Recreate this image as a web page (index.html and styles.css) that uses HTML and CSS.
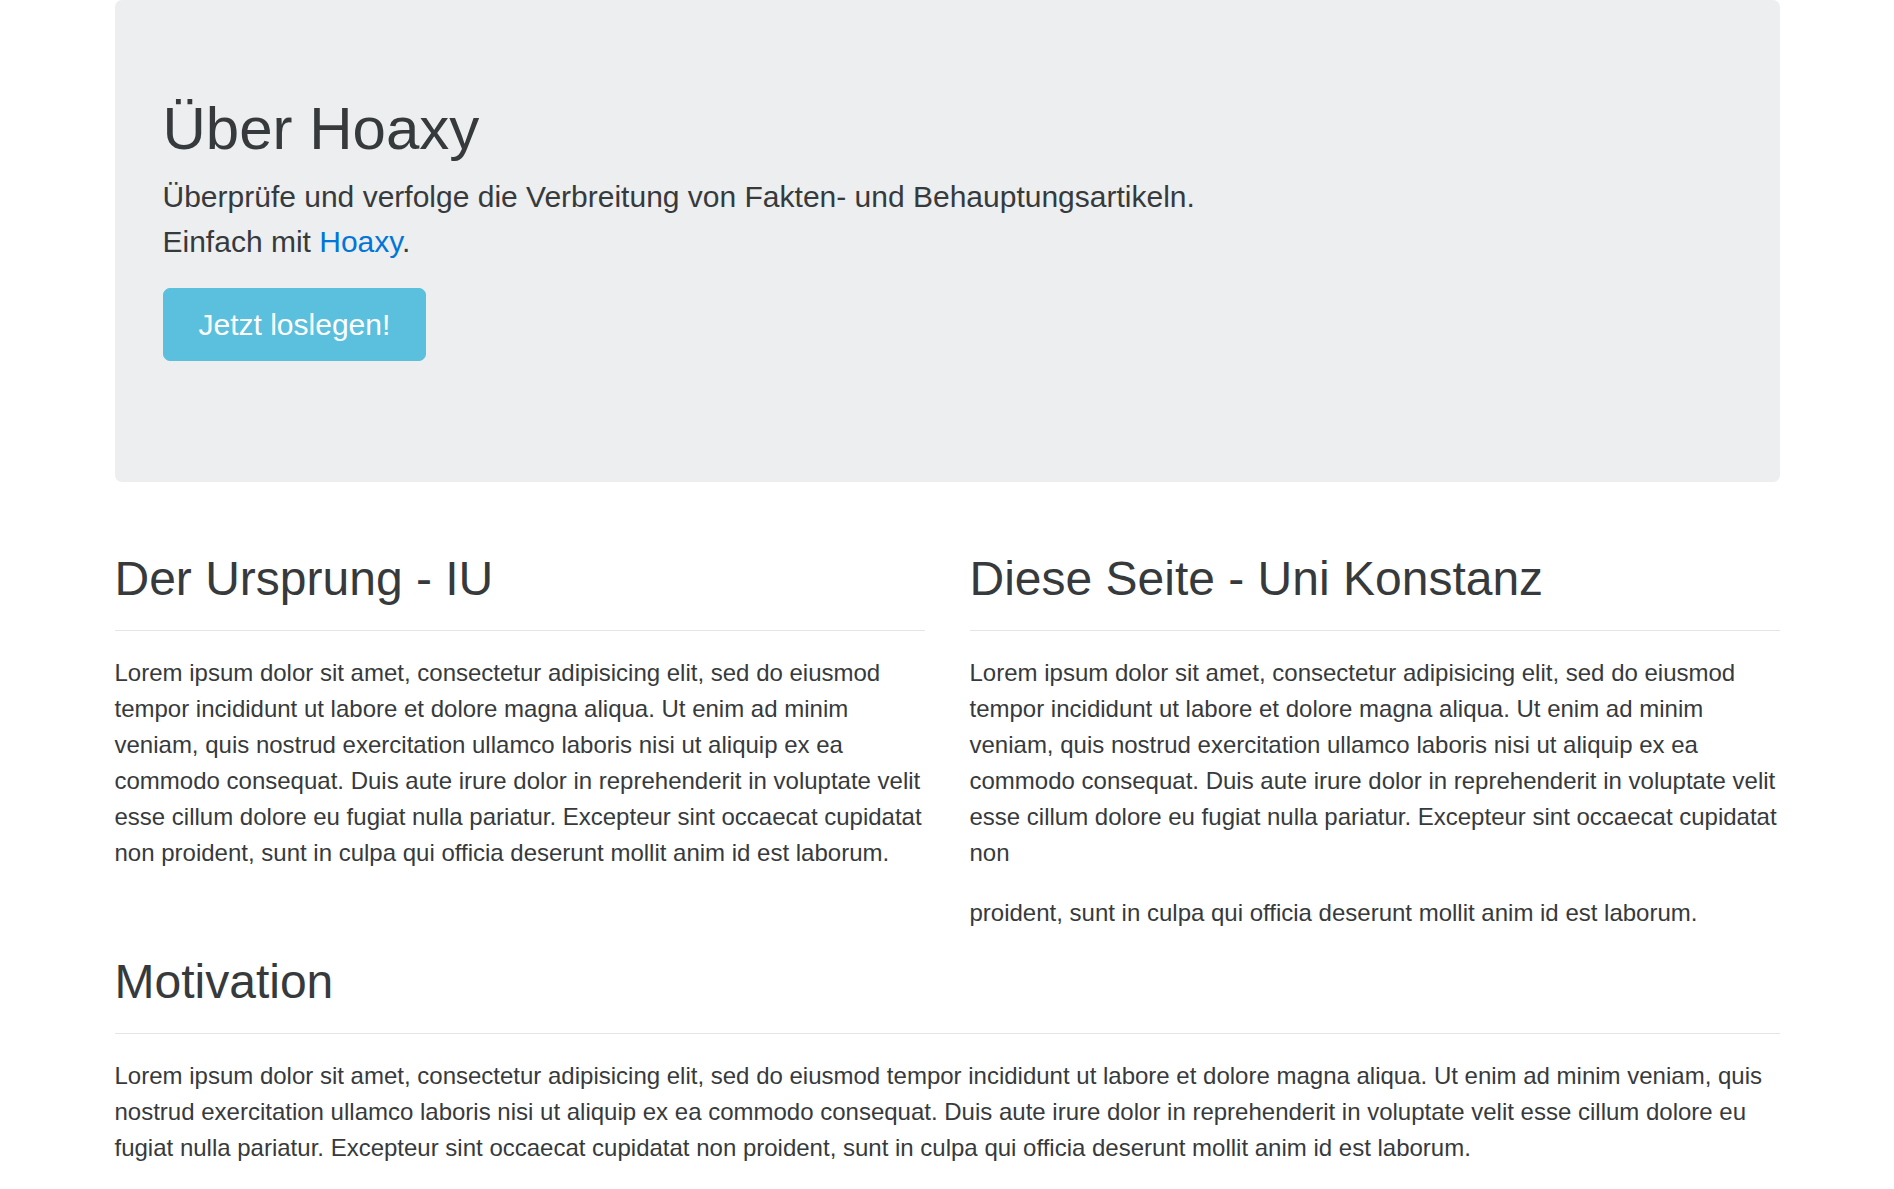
FILE: index.html
```html
<!DOCTYPE html>
<html lang="de">
<head>
<meta charset="utf-8">
<title>Über Hoaxy</title>
<link rel="stylesheet" href="styles.css">
</head>
<body>
<div class="container">
  <div class="jumbotron">
    <h1 class="display">Über Hoaxy</h1>
    <p class="lead">Überprüfe und verfolge die Verbreitung von Fakten- und Behauptungsartikeln.<br>Einfach mit <a href="#">Hoaxy</a>.</p>
    <div class="actions"><a class="btn" href="#">Jetzt loslegen!</a></div>
  </div>

  <div class="row">
    <div class="col">
      <h2 class="title">Der Ursprung - IU</h2>
      <hr class="divider">
      <p class="text">Lorem ipsum dolor sit amet, consectetur adipisicing elit, sed do eiusmod tempor incididunt ut labore et dolore magna aliqua. Ut enim ad minim veniam, quis nostrud exercitation ullamco laboris nisi ut aliquip ex ea commodo consequat. Duis aute irure dolor in reprehenderit in voluptate velit esse cillum dolore eu fugiat nulla pariatur. Excepteur sint occaecat cupidatat non proident, sunt in culpa qui officia deserunt mollit anim id est laborum.</p>
    </div>
    <div class="col">
      <h2 class="title">Diese Seite - Uni Konstanz</h2>
      <hr class="divider">
      <p class="text">Lorem ipsum dolor sit amet, consectetur adipisicing elit, sed do eiusmod tempor incididunt ut labore et dolore magna aliqua. Ut enim ad minim veniam, quis nostrud exercitation ullamco laboris nisi ut aliquip ex ea commodo consequat. Duis aute irure dolor in reprehenderit in voluptate velit esse cillum dolore eu fugiat nulla pariatur. Excepteur sint occaecat cupidatat non</p>
      <p class="text">proident, sunt in culpa qui officia deserunt mollit anim id est laborum.</p>
    </div>
  </div>

  <div class="section">
    <h2 class="title">Motivation</h2>
    <hr class="divider">
    <p class="text last">Lorem ipsum dolor sit amet, consectetur adipisicing elit, sed do eiusmod tempor incididunt ut labore et dolore magna aliqua. Ut enim ad minim veniam, quis nostrud exercitation ullamco laboris nisi ut aliquip ex ea commodo consequat. Duis aute irure dolor in reprehenderit in voluptate velit esse cillum dolore eu fugiat nulla pariatur. Excepteur sint occaecat cupidatat non proident, sunt in culpa qui officia deserunt mollit anim id est laborum.</p>
  </div>
</div>
</body>
</html>
```

FILE: styles.css
```css
html, body {
  margin: 0;
  padding: 0;
  background: #fff;
}

body {
  font-family: "Liberation Sans", Arial, Helvetica, sans-serif;
  font-size: 24px;
  line-height: 1.5;
  color: #373a3c;
}

.container {
  width: 1665px;
  margin: 0 auto;
}

.jumbotron {
  background: #eceeef;
  border-radius: 7px;
  padding: 96px 48px 97px;
  margin-bottom: 71px;
}

.display {
  font-size: 60px;
  line-height: 66px;
  font-weight: 400;
  margin: 0 0 12px;
}

.lead {
  font-size: 30px;
  line-height: 45px;
  font-weight: 300;
  margin: 0 0 24px;
}

.lead a {
  color: #0275d8;
  text-decoration: none;
}

.actions {
  display: flex;
  margin-bottom: 24px;
}

.btn {
  display: inline-block;
  background: #5bc0de;
  border: 1px solid #5bc0de;
  color: #fff;
  font-size: 30px;
  line-height: 47px;
  padding: 12px 35px;
  border-radius: 7px;
  text-decoration: none;
}

.row {
  display: grid;
  grid-template-columns: 1fr 1fr;
  column-gap: 45px;
}

.title {
  font-size: 48px;
  line-height: 52.8px;
  font-weight: 400;
  margin: 0;
}

.divider {
  border: 0;
  height: 0;
  border-top: 1px solid rgba(0, 0, 0, 0.1);
  margin: 24px 0;
}

.text {
  margin: 0 0 24px;
}

.row .col .text:last-child {
  margin-bottom: 25px;
}

.text.last {
  margin-bottom: 0;
}
```
